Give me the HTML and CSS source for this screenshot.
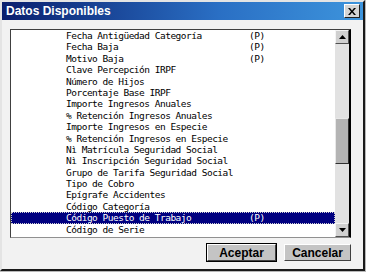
FILE: index.html
```html
<!DOCTYPE html>
<html>
    <head>
        <title>Datos Disponibles</title>
        <link rel="stylesheet" href="styles.css">
    </head>
    <body>
        <div class="window">
            <div class="titlebar">
                <span class="title">Datos Disponibles</span>
                <button class="close-button">
                    <svg width="8" height="7" viewBox="0 0 8 7">
                        <path d="M0 0h2l2 2.5L6 0h2L5 3.5 8 7H6L4 4.5 2 7H0l3-3.5z" fill="#000"/>
                    </svg>
                </button>
            </div>

            <div class="content">
                <div class="list-box">
                    <div class="rows">
                        <div class="row"><span class="name">Fecha Antigüedad Categoría</span><span class="flag">(P)</span></div>
                        <div class="row"><span class="name">Fecha Baja</span><span class="flag">(P)</span></div>
                        <div class="row"><span class="name">Motivo Baja</span><span class="flag">(P)</span></div>
                        <div class="row"><span class="name">Clave Percepción IRPF</span></div>
                        <div class="row"><span class="name">Número de Hijos</span></div>
                        <div class="row"><span class="name">Porcentaje Base IRPF</span></div>
                        <div class="row"><span class="name">Importe Ingresos Anuales</span></div>
                        <div class="row"><span class="name">% Retención Ingresos Anuales</span></div>
                        <div class="row"><span class="name">Importe Ingresos en Especie</span></div>
                        <div class="row"><span class="name">% Retención Ingresos en Especie</span></div>
                        <div class="row"><span class="name">Nì Matrícula Seguridad Social</span></div>
                        <div class="row"><span class="name">Nì Inscripción Seguridad Social</span></div>
                        <div class="row"><span class="name">Grupo de Tarifa Seguridad Social</span></div>
                        <div class="row"><span class="name">Tipo de Cobro</span></div>
                        <div class="row"><span class="name">Epígrafe Accidentes</span></div>
                        <div class="row"><span class="name">Código Categoría</span></div>
                        <div class="row selected"><span class="name">Código Puesto de Trabajo</span><span class="flag">(P)</span></div>
                        <div class="row"><span class="name">Código de Serie</span></div>
                        <div class="row"><span class="name">Indicador Pluriempleado</span></div>
                    </div>

                    <div class="scrollbar">
                        <div class="scroll-button">
                            <svg width="7" height="4" viewBox="0 0 7 4"><path d="M3.5 0L7 4H0z" fill="#000"/></svg>
                        </div>
                        <div class="track-top"></div>
                        <div class="thumb"></div>
                        <div class="track-bottom"></div>
                        <div class="scroll-button">
                            <svg width="7" height="4" viewBox="0 0 7 4"><path d="M0 0h7L3.5 4z" fill="#000"/></svg>
                        </div>
                    </div>
                </div>

                <div class="buttons">
                    <button class="button default">Aceptar</button>
                    <button class="button">Cancelar</button>
                </div>
            </div>
        </div>
    </body>
</html>
```

FILE: styles.css
```css
body {
    margin: 0;
    width: 366px;
    height: 272px;
    overflow: hidden;
    background-color: #b8b8b8;
    font-family: "Liberation Sans", Arial, sans-serif;
}

.window {
    box-sizing: border-box;
    width: 365px;
    height: 271px;
    background-color: #f2f2f2;
    border: 2px solid;
    border-color: #e4e4e4 #1a1a1a #1a1a1a #e4e4e4;

    display: flex;
    flex-direction: column;
}

.titlebar {
    height: 18px;
    padding: 0 3px 0 4px;
    background: linear-gradient(to right, #0a1f6e, #2a6fc4 60%, #3d94dc);

    display: flex;
    align-items: center;
    justify-content: space-between;
}

.title {
    color: #fff;
    font-size: 12px;
    font-weight: bold;
}

.close-button {
    width: 16px;
    height: 14px;
    padding: 0;
    background-color: #d4d4d4;
    border: 1px solid;
    border-color: #fff #202020 #202020 #fff;

    display: flex;
    align-items: center;
    justify-content: center;
}

.content {
    padding: 9px 0 0 8px;
    display: flex;
    flex-direction: column;
}

.list-box {
    box-sizing: border-box;
    width: 341px;
    height: 209px;
    background-color: #fff;
    border: 1px solid;
    border-color: #404040 #000 #909090 #404040;

    display: flex;
}

.rows {
    flex: 1;
    overflow: hidden;
    font-family: "DejaVu Sans Mono", "Liberation Mono", monospace;
    font-size: 9.5px;
    letter-spacing: -0.5px;
    color: #000;
}

.row {
    height: 11.4px;
    line-height: 11.4px;
    padding-left: 55px;
    white-space: nowrap;
    display: flex;
}

.name {
    width: 183px;
}

.selected {
    background-color: #000080;
    color: #fff;
    outline: 1px dotted #d0d0d0;
    outline-offset: -1px;
}

.scrollbar {
    width: 14px;
    background-color: #e2e2e2;
    border-right: 1px solid #000;

    display: flex;
    flex-direction: column;
}

.scroll-button {
    box-sizing: border-box;
    height: 14px;
    background-color: #d0d0d0;
    border: 1px solid;
    border-color: #f4f4f4 #505050 #505050 #f4f4f4;

    display: flex;
    align-items: center;
    justify-content: center;
}

.track-top {
    height: 74px;
}

.thumb {
    box-sizing: border-box;
    height: 46px;
    background-color: #b4b4b4;
    border: 1px solid;
    border-color: #e8e8e8 #303030 #303030 #e8e8e8;
}

.track-bottom {
    flex: 1;
}

.buttons {
    width: 341px;
    margin-top: 6px;
    display: flex;
    justify-content: flex-end;
    gap: 8px;
}

.button {
    box-sizing: border-box;
    height: 17px;
    width: 67px;
    padding: 0;
    background-color: #c4c4c4;
    border: 1px solid;
    border-color: #fff #404040 #404040 #fff;
    font-family: "Liberation Sans", Arial, sans-serif;
    font-size: 12px;
    font-weight: bold;
    color: #000;
}

.default {
    width: 69px;
    outline: 1px solid #000;
}
```
